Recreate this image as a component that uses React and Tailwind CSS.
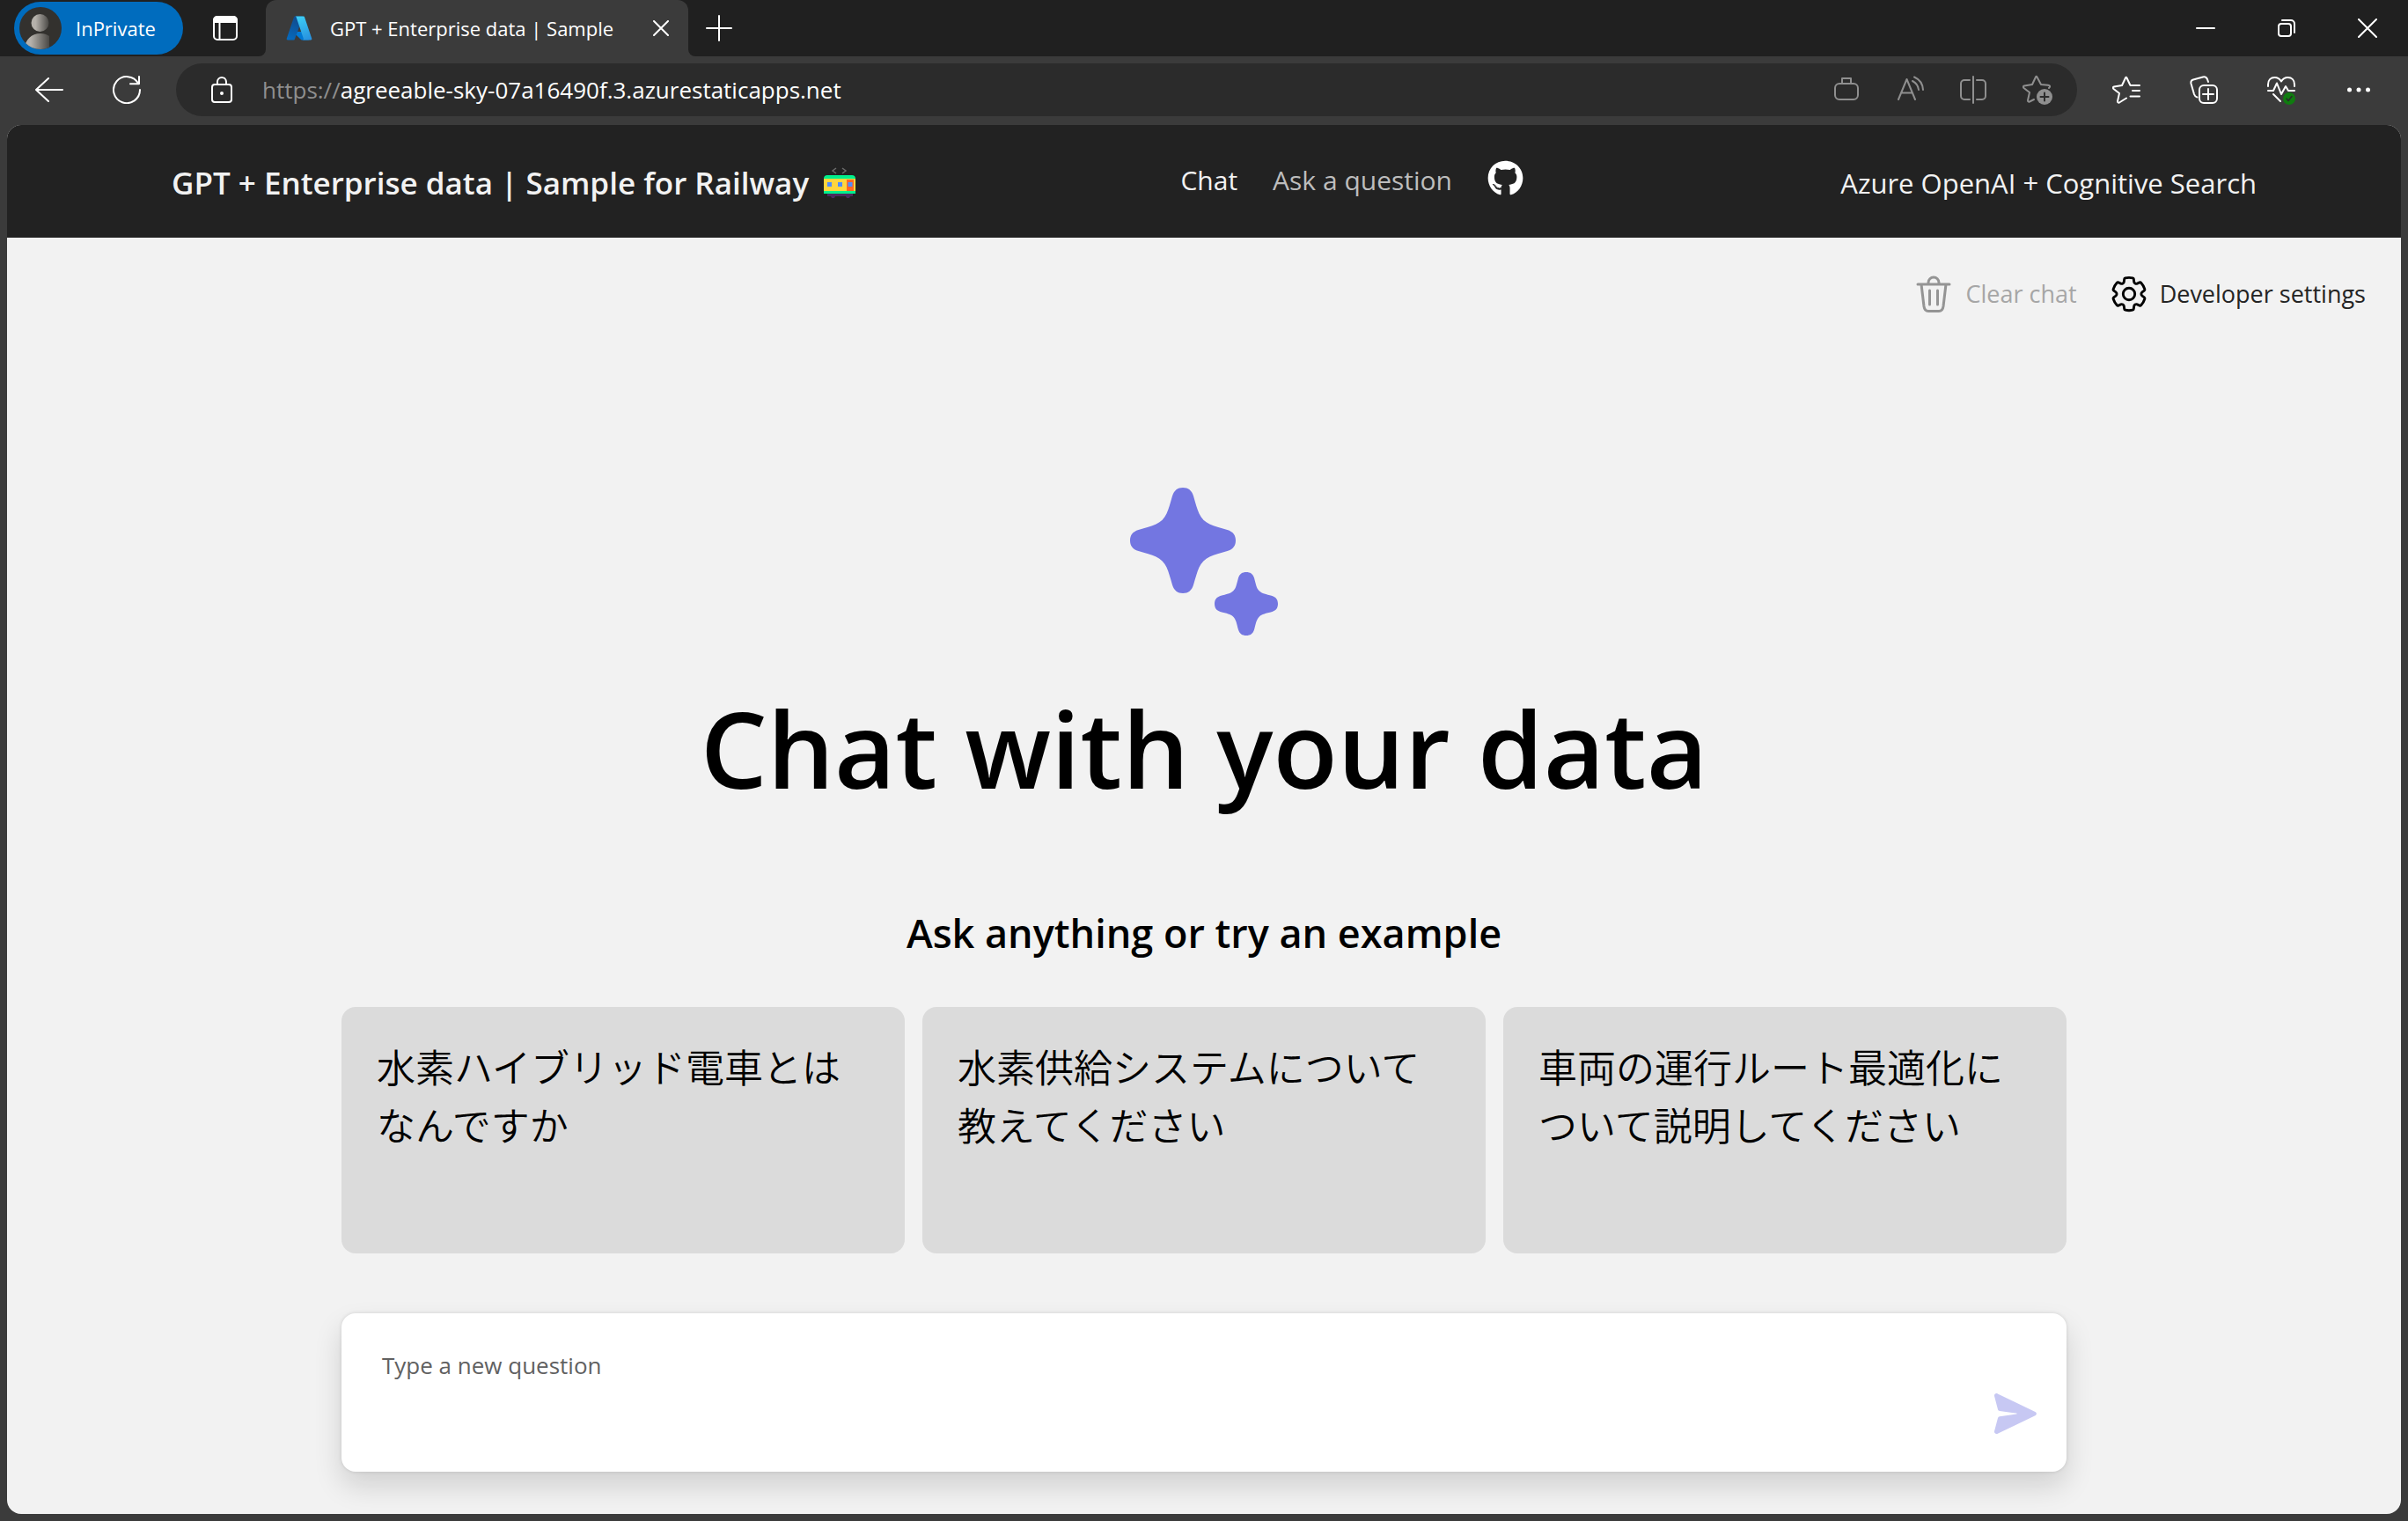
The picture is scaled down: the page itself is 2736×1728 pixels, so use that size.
import React from "react";
import { FaGithub } from "react-icons/fa";

function Icon({ w = 32, h = 32, sw = 2, className = "", children }) {
  return (
    <svg
      width={w}
      height={h}
      viewBox={`0 0 ${w} ${h}`}
      fill="none"
      stroke="currentColor"
      strokeWidth={sw}
      strokeLinecap="round"
      strokeLinejoin="round"
      className={"shrink-0 " + className}
      aria-hidden="true"
    >
      {children}
    </svg>
  );
}

function IconButton({ label, className = "", children }) {
  return (
    <button type="button" aria-label={label} className={"flex shrink-0 items-center justify-center " + className}>
      {children}
    </button>
  );
}

function Avatar() {
  return (
    <svg width="48" height="48" viewBox="0 0 48 48" aria-hidden="true" className="shrink-0">
      <defs>
        <linearGradient id="person" x1="0" x2="1" y1="0" y2="0">
          <stop offset="0.25" stopColor="#b5b1ab" />
          <stop offset="1" stopColor="#4a4845" />
        </linearGradient>
        <clipPath id="round">
          <circle cx="24" cy="24" r="24" />
        </clipPath>
      </defs>
      <circle cx="24" cy="24" r="24" fill="#33312e" />
      <g clipPath="url(#round)" fill="url(#person)">
        <circle cx="23.500" cy="18" r="10" />
        <path d="M6 48C6 37 14 30 24 30c4 0 7 1 10 3v15z" />
      </g>
    </svg>
  );
}

function AzureLogo() {
  return (
    <svg width="30" height="28" viewBox="2 5 92 86" aria-hidden="true" className="shrink-0">
      <defs>
        <linearGradient id="az1" x1="0.6" y1="0" x2="0.3" y2="1">
          <stop stopColor="#114a8b" />
          <stop offset="1" stopColor="#0669bc" />
        </linearGradient>
        <linearGradient id="az2" x1="0.4" y1="0" x2="0.7" y2="1">
          <stop stopColor="#3ccbf4" />
          <stop offset="1" stopColor="#2892df" />
        </linearGradient>
      </defs>
      <path fill="#0078d4" d="M71.175 60.261h-41.29a1.911 1.911 0 0 0-1.305 3.309l26.532 24.764a4.171 4.171 0 0 0 2.846 1.121h23.38z" />
      <path
        fill="url(#az1)"
        d="M33.338 6.544a4.118 4.118 0 0 0-3.943 2.879L4.252 83.917a4.14 4.14 0 0 0 3.908 5.538h20.787a4.443 4.443 0 0 0 3.41-2.9l5.014-14.777 5-11.5L59.47 6.544z"
      />
      <path
        fill="url(#az2)"
        d="M66.595 9.364a4.145 4.145 0 0 0-3.928-2.82H33.648a4.146 4.146 0 0 1 3.928 2.82l25.184 74.62a4.146 4.146 0 0 1-3.928 5.472h29.02a4.146 4.146 0 0 0 3.927-5.472z"
      />
    </svg>
  );
}

function Train() {
  return (
    <svg width="38" height="36" viewBox="0 0 38 36" role="img" aria-label="Railway car" className="shrink-0">
      <path d="M15 1l-4 3 4 3M22 1l4 3-4 3" fill="none" stroke="#6b6b6b" strokeWidth="1.500" />
      <path d="M5 30h29v3H31l-1 2h-3l-1-2H14l-1 2h-3l-1-2H5z" fill="#4a2b5e" />
      <path d="M1 30V13c0-2.500 1.500-4 4-4h28c2.500 0 4 1.500 4 4v17z" fill="#00f08c" />
      <path d="M1 13h36v14H1z" fill="#ffd53d" />
      <path d="M27 14h8v13h-8z" fill="#ff6723" />
      <path d="M5 17h5v5H5zM17 17h5v5h-5zM28.500 17h5v5h-5z" fill="#4f8cff" />
    </svg>
  );
}

function Sparkle() {
  return (
    <svg width="168" height="168" viewBox="0 0 168 168" fill="#7376e1" aria-hidden="true">
      <path
        d="M60 0C66 0 70 3 72 9.500C74.500 18 76 24 78.500 29.500C81 35 85 39 90.500 41.500C96 44 102 45.500 110.500 48C117 50 120 54 120 60
        C120 66 117 70 110.500 72C102 74.500 96 76 90.500 78.500C85 81 81 85 78.500 90.500C76 96 74.500 102 72 110.500C70 117 66 120 60 120
        C54 120 50 117 48 110.500C45.500 102 44 96 41.500 90.500C39 85 35 81 29.500 78.500C24 76 18 74.500 9.500 72C3 70 0 66 0 60
        C0 54 3 50 9.500 48C18 45.500 24 44 29.500 41.500C35 39 39 35 41.500 29.500C44 24 45.500 18 48 9.500C50 3 54 0 60 0z"
      />
      <path
        d="M132 96C136.500 96 139.500 98 141 102.500C143 110 143.500 114 146.700 117.300C150 120.500 154 121 161.500 123C166 124.500 168 127.500 168 132
        C168 136.500 166 139.500 161.500 141C154 143 150 143.500 146.700 146.700C143.500 150 143 154 141 161.500C139.500 166 136.500 168 132 168
        C127.500 168 124.500 166 123 161.500C121 154 120.500 150 117.300 146.700C114 143.500 110 143 102.500 141C98 139.500 96 136.500 96 132
        C96 127.500 98 124.500 102.500 123C110 121 114 120.500 117.300 117.300C120.500 114 121 110 123 102.500C124.500 98 127.500 96 132 96z"
      />
    </svg>
  );
}

function TitleBar() {
  return (
    <div className="flex h-16 items-center bg-[#202020] text-white">
      <button type="button" className="ml-4 flex h-[60px] w-48 items-center gap-4 rounded-full bg-[#006cbe] pl-1.5 text-[22px]">
        <Avatar />
        InPrivate
      </button>
      <IconButton label="Tab actions" className="ml-8 h-12 w-8">
        <Icon w={28} h={28}>
          <rect x="1" y="1" width="26" height="26" rx="4" />
          <path d="M1 7V5a4 4 0 0 1 4-4h18a4 4 0 0 1 4 4v2z" fill="currentColor" />
          <path d="M7.500 7V27" />
        </Icon>
      </IconButton>
      <div className="relative ml-[30px] flex h-full w-[480px] items-center rounded-t-xl bg-[#3b3b3b] pr-[22px] pl-[23px]">
        <span className="absolute bottom-0 -left-2 h-2 w-2 bg-[#3b3b3b]">
          <span className="block h-2 w-2 rounded-br-lg bg-[#202020]" />
        </span>
        <span className="absolute -right-2 bottom-0 h-2 w-2 bg-[#3b3b3b]">
          <span className="block h-2 w-2 rounded-bl-lg bg-[#202020]" />
        </span>
        <AzureLogo />
        <span className="ml-5 flex-1 whitespace-nowrap text-[22px]">GPT + Enterprise data | Sample</span>
        <IconButton label="Close tab">
          <Icon w={18} h={18}>
            <path d="M1 1l16 16M17 1L1 17" />
          </Icon>
        </IconButton>
      </div>
      <IconButton label="New tab" className="ml-5">
        <Icon w={30} h={30}>
          <path d="M15 1v28M1 15h28" />
        </Icon>
      </IconButton>
      <div className="ml-auto flex items-center gap-[70px] pr-[35px]">
        <IconButton label="Minimize">
          <Icon w={22} h={22}>
            <path d="M1 11h20" />
          </Icon>
        </IconButton>
        <IconButton label="Restore">
          <Icon w={22} h={22}>
            <rect x="2" y="6" width="14" height="14" rx="3" />
            <path d="M6 2h10a4 4 0 0 1 4 4v10" />
          </Icon>
        </IconButton>
        <IconButton label="Close">
          <Icon w={22} h={22}>
            <path d="M1 1l20 20M21 1L1 21" />
          </Icon>
        </IconButton>
      </div>
    </div>
  );
}

function AddressBar() {
  return (
    <div className="flex h-[78px] items-center pb-[2px] text-white">
      <IconButton label="Back" className="ml-10">
        <Icon>
          <path d="M1 16H31M15 3L1 16L15 29" />
        </Icon>
      </IconButton>
      <IconButton label="Refresh" className="ml-14">
        <Icon>
          <path d="M31 16A15 15 0 1 1 29 8.600M30 1V9.300H20" />
        </Icon>
      </IconButton>
      <div className="ml-10 flex h-[60px] flex-1 items-center rounded-full bg-[#2b2b2b] pr-7 pl-10">
        <Icon w={24} h={30}>
          <rect x="1" y="9" width="22" height="20" rx="3" />
          <path d="M7 9V6a5 5 0 0 1 10 0V9" />
          <circle cx="12" cy="19" r="1" fill="currentColor" />
        </Icon>
        <a href="#top" className="ml-[34px] flex-1 text-[26px]">
          <span className="text-[#8f8f8f]">https://</span>agreeable-sky-07a16490f.3.azurestaticapps.net
        </a>
        <div className="flex gap-10 text-[#8f8f8f]">
          <IconButton label="Shopping">
            <Icon>
              <rect x="3" y="9" width="26" height="18" rx="5" />
              <path d="M11 9V3h10v6" />
            </Icon>
          </IconButton>
          <IconButton label="Read aloud">
            <Icon>
              <path d="M3 27L12.500 4L22 27M6.500 19.500H18.500M19 6A13 13 0 0 1 26 16M21 1.500A17 17 0 0 1 31 16" />
            </Icon>
          </IconButton>
          <IconButton label="Split screen">
            <Icon>
              <path d="M16 1V31M12 5H6a4 4 0 0 0-4 4v14a4 4 0 0 0 4 4H12M20 5h6a4 4 0 0 1 4 4v14a4 4 0 0 1-4 4h-6" />
            </Icon>
          </IconButton>
          <IconButton label="Add to favorites">
            <Icon w={34} h={34}>
              <path d="M30 15C32 13 31 12 29 11.800L21 11L16.500 2.500C16 1.500 15.500 1.500 15 2.500L11 11L2 12.500C0.500 13 0.500 14 1.500 15L8 20L6 29C6 30.500 7 31 8 30.500L13 28" />
              <circle cx="25" cy="25" r="9" fill="currentColor" stroke="none" />
              <path d="M25 20.500v9M20.500 25h9" stroke="#2b2b2b" />
            </Icon>
          </IconButton>
        </div>
      </div>
      <div className="ml-10 flex gap-14 pr-10">
        <IconButton label="Favorites">
          <Icon>
            <path d="M20 10L16.500 2.500C16 1.500 15.500 1.500 15 2.500L11 11L2 12.500C0.500 13 0.500 14 1.500 15L8 20L6 29C6 30.500 7 31 8 30.500L16 25.500M20.500 11H31M23 17H31M20.500 23.500H31" />
          </Icon>
        </IconButton>
        <IconButton label="Collections">
          <Icon>
            <rect x="11" y="11" width="20" height="20" rx="5" />
            <path d="M21 15v12M15 21h12M8.500 24.500C6.500 24 5.500 22.500 5 21L1.500 9C1 6.500 2 5 4 4.500L15 1.500C17 1 19 2 20 4L21 7" />
          </Icon>
        </IconButton>
        <IconButton label="Browser essentials">
          <Icon w={32} h={34}>
            <path d="M1 13V11C1 6 4 3 8.500 3C12 3 14.500 5 16 7.500C17.500 5 20 3 23.500 3C28 3 31 6 31 11V13M1 18H7L11 9.500L16 22L21 13L24 18H31M7 22L15 30" />
            <circle cx="25" cy="27" r="7" fill="#107c10" stroke="none" />
            <path d="M22 27l2 2.500l4-5" stroke="#2b2b2b" strokeWidth="1.500" />
          </Icon>
        </IconButton>
        <IconButton label="Settings and more">
          <Icon>
            <g fill="currentColor" stroke="none">
              <circle cx="5.500" cy="16" r="2.500" />
              <circle cx="16" cy="16" r="2.500" />
              <circle cx="26.500" cy="16" r="2.500" />
            </g>
          </Icon>
        </IconButton>
      </div>
    </div>
  );
}

function AppHeader() {
  return (
    <header className="flex h-32 items-center justify-between bg-[#222222] pr-[164px] pl-[187px] text-[#f2f2f2]">
      <h3 className="flex items-center gap-4 pt-1 text-[35px] font-semibold">
        GPT + Enterprise data | Sample for Railway
        <Train />
      </h3>
      <nav className="flex items-center gap-10 pb-1 pl-2 text-[30px]">
        <a href="#chat">Chat</a>
        <a href="#ask" className="text-[#bdbdbd]">
          Ask a question
        </a>
        <a href="#github" aria-label="GitHub repository" className="pb-1 text-white">
          <FaGithub className="h-[41px] w-[41px]" />
        </a>
      </nav>
      <h4 className="pt-1 text-[31px]">Azure OpenAI + Cognitive Search</h4>
    </header>
  );
}

const examples = [
  "水素ハイブリッド電車とはなんですか",
  "水素供給システムについて教えてください",
  "車両の運行ルート最適化について説明してください",
];

export default function App() {
  return (
    <div className="flex min-h-screen flex-col bg-[#3b3b3b] font-['Open_Sans','Noto_Sans_CJK_JP',sans-serif]">
      <TitleBar />
      <AddressBar />
      <div className="mx-2 mb-2 flex flex-1 flex-col overflow-hidden rounded-2xl bg-[#f2f2f2]">
        <AppHeader />
        <main className="flex flex-1 flex-col">
          <div className="flex h-32 items-center justify-end gap-9 pr-10 text-[27px]">
            <button type="button" disabled className="flex items-center gap-4 text-[#a6a6a6]">
              <Icon w={40} h={42} sw={3} className="text-[#949494]">
                <path d="M2 10H38M14 10V8a6 6 0 0 1 12 0V10M6 10L9 35C9.500 38.500 11 40.500 14 40.500H26C29 40.500 30.500 38.500 31 35L34 10M15.500 17V33M24.500 17V33" />
              </Icon>
              Clear chat
            </button>
            <button type="button" className="flex items-center gap-3 text-[#242424]">
              <svg width="46" height="46" viewBox="0 0 24 24" fill="none" stroke="black" strokeWidth="1.500" className="shrink-0" aria-hidden="true">
                <path d="M12.010 2.250c.74 0 1.470.1 2.180.25.32.07.55.33.59.65l.17 1.530a1.380 1.380 0 0 0 1.920 1.110l1.400-.61c.3-.13.64-.06.85.17a9.800 9.800 0 0 1 2.200 3.800c.1.3 0 .63-.26.82l-1.250.92a1.380 1.380 0 0 0 0 2.220l1.250.92c.26.19.36.52.27.82a9.800 9.800 0 0 1-2.200 3.800.75.75 0 0 1-.85.17l-1.410-.62a1.380 1.380 0 0 0-1.930 1.120l-.17 1.520a.75.75 0 0 1-.58.65 9.520 9.520 0 0 1-4.400 0 .75.75 0 0 1-.57-.65l-.17-1.520a1.380 1.380 0 0 0-1.930-1.110l-1.400.62a.75.75 0 0 1-.85-.18 9.800 9.800 0 0 1-2.200-3.800c-.1-.3 0-.63.26-.82l1.250-.92a1.380 1.380 0 0 0 0-2.220l-1.240-.92a.75.75 0 0 1-.28-.82 9.800 9.800 0 0 1 2.200-3.800c.23-.23.57-.3.86-.17l1.400.62c.4.17.86.15 1.250-.08.38-.22.63-.6.68-1.040l.17-1.530a.75.75 0 0 1 .58-.65c.72-.16 1.450-.24 2.200-.25z" />
                <circle cx="12" cy="12" r="3.500" />
              </svg>
              Developer settings
            </button>
          </div>
          <div className="mx-auto flex w-full max-w-[1960px] flex-1 flex-col items-center pt-[156px] pb-12">
            <Sparkle />
            <h1 className="mt-12 text-[120px] leading-[160px] font-semibold text-black">Chat with your data</h1>
            <h2 className="mt-[100px] text-[45px] leading-[60px] font-semibold text-black">Ask anything or try an example</h2>
            <ul className="mt-[54px] grid w-full grid-cols-3 gap-5">
              {examples.map((text) => (
                <li key={text}>
                  <button
                    type="button"
                    className="flex h-[280px] w-full items-start rounded-2xl bg-[#dbdbdb] px-10 pt-9 text-left text-[44px] leading-[66px] font-[350] text-black"
                  >
                    {text}
                  </button>
                </li>
              ))}
            </ul>
            <form className="mt-auto flex h-[180px] w-full rounded-2xl bg-white shadow-[0_16px_32px_rgba(0,0,0,0.14),0_0_4px_rgba(0,0,0,0.12)]">
              <textarea
                aria-label="Question"
                placeholder="Type a new question"
                className="flex-1 resize-none bg-transparent py-10 pl-[46px] text-[26px] text-black outline-none placeholder:text-[#616161]"
              />
              <button type="button" aria-label="Ask question" className="mr-[34px] mb-[43px] self-end">
                <svg width="48" height="46" viewBox="0 0 48 46" fill="#c7c8f3" aria-hidden="true">
                  <path d="M0 3C-.4.800 1.800-.6 3.800.4L46.400 21C48.400 22 48.400 24.200 46.400 25.200L3.800 45.800C1.800 46.600-.4 45.200 0 43L4 28C4.300 27 5 26.400 6 26.200L25 23.600C26 23.400 26 22.800 25 22.600L6 20C5 19.800 4.300 19.200 4 18.200z" />
                </svg>
              </button>
            </form>
          </div>
        </main>
      </div>
    </div>
  );
}
